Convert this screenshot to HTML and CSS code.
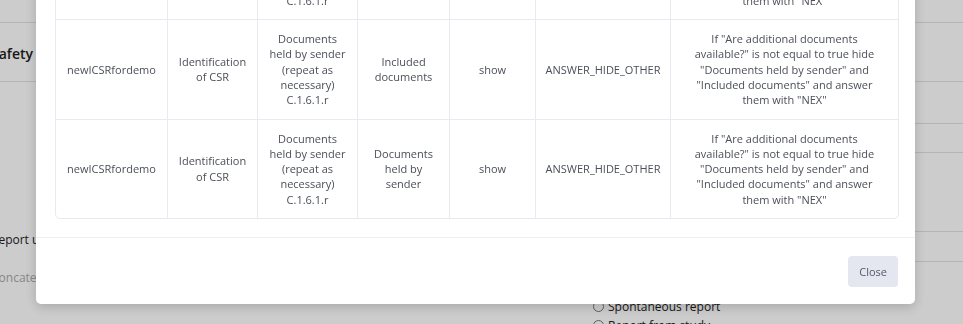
FILE: index.html
```html
<!DOCTYPE html>
<html lang="en">
<head>
    <meta charset="UTF-8">
    <meta name="viewport" content="width=device-width, initial-scale=1.0">
    <title>Safety report - rules</title>
    <link rel="stylesheet" href="styles.css">
</head>
<body>
    <div class="page">
        <div class="top-row"></div>
        <div class="title-row">Safety report details</div>
        <div class="form-area">
            <div class="form-left">
                <div class="field-label">Report unique identifier</div>
                <div class="field-input">Concatenated identifier</div>
            </div>
            <div class="form-right">
                <div class="line-block b1"></div>
                <div class="line-block b2"></div>
                <div class="line-block b3"></div>
                <div class="line-block b4"></div>
                <label class="radio"><span class="circle"></span>Spontaneous report</label>
                <label class="radio"><span class="circle"></span>Report from study</label>
            </div>
        </div>
    </div>

    <div class="backdrop">
        <div class="modal">
            <div class="modal-header">Rules</div>
            <div class="modal-body">
                <table class="rules">
                    <colgroup>
                        <col style="width:112px">
                        <col style="width:90px">
                        <col style="width:100px">
                        <col style="width:92px">
                        <col style="width:86px">
                        <col style="width:135px">
                        <col style="width:227px">
                    </colgroup>
                    <thead>
                        <tr>
                            <th>Form</th>
                            <th>Section</th>
                            <th>Field</th>
                            <th>Target</th>
                            <th>Action</th>
                            <th>Type</th>
                            <th>Description</th>
                        </tr>
                    </thead>
                    <tbody id="rules-body"></tbody>
                </table>
            </div>
            <div class="modal-footer">
                <button class="btn-close">Close</button>
            </div>
        </div>
    </div>

    <script>
        const desc = 'If "Are additional documents available?" is not equal to true hide "Documents held by sender" and "Included documents" and answer them with "NEX"';
        const rules = [
            { form: "newICSRfordemo", section: "Identification of CSR", field: "Documents held by sender (repeat as necessary) C.1.6.1.r", target: "Documents held by sender", action: "show", type: "ANSWER_HIDE_OTHER", desc },
            { form: "newICSRfordemo", section: "Identification of CSR", field: "Documents held by sender (repeat as necessary) C.1.6.1.r", target: "Included documents", action: "show", type: "ANSWER_HIDE_OTHER", desc },
            { form: "newICSRfordemo", section: "Identification of CSR", field: "Documents held by sender (repeat as necessary) C.1.6.1.r", target: "Documents held by sender", action: "show", type: "ANSWER_HIDE_OTHER", desc }
        ];

        const body = document.getElementById('rules-body');
        rules.forEach(rule => {
            const tr = document.createElement('tr');
            [rule.form, rule.section, rule.field, rule.target, rule.action, rule.type, rule.desc].forEach((value, i) => {
                const td = document.createElement('td');
                if (i === 6) td.className = 'desc';
                td.textContent = value;
                tr.appendChild(td);
            });
            body.appendChild(tr);
        });
    </script>
</body>
</html>
```

FILE: styles.css
```css
body {
    margin: 0;
    background-color: #fff;
    font-family: "Open Sans", Arial, sans-serif;
    color: #222;
    overflow: hidden;
}

/* page behind the modal */
.page {
    margin-left: -9px;
}

.top-row {
    height: 22px;
    border-bottom: 1px solid #e1e1e4;
}

.title-row {
    height: 59px;
    display: flex;
    align-items: center;
    padding-top: 2px;
    box-sizing: border-box;
    border-bottom: 1px solid #e1e1e4;
    font-size: 14px;
    font-weight: 600;
    color: #1d1d1d;
}

.form-area {
    display: flex;
}

.form-left {
    width: 600px;
    padding-top: 150px;
}

.field-label {
    font-size: 12px;
    line-height: 16px;
    color: #222;
}

.field-input {
    margin-top: 22px;
    font-size: 12px;
    line-height: 16px;
    color: #aaa;
}

.form-right {
    flex: 1;
    display: flex;
    flex-direction: column;
}

.line-block {
    border-bottom: 1px solid #e1e1e4;
}

.b1 { height: 41px; }
.b2 { height: 28px; }
.b3 { height: 78px; }
.b4 { height: 29px; }

.radio {
    display: flex;
    align-items: center;
    gap: 4px;
    padding-left: 2px;
    font-size: 12px;
    line-height: 19px;
    color: #222;
}

.radio:first-of-type {
    margin-top: 35px;
}

.circle {
    width: 9px;
    height: 9px;
    border: 1px solid #777;
    border-radius: 50%;
}

/* modal */
.backdrop {
    position: fixed;
    inset: 0;
    background-color: rgba(0, 0, 0, 0.2);
    display: flex;
    align-items: flex-end;
    padding: 0 0 20px 36px;
}

.modal {
    width: 879px;
    background-color: #fff;
    border-radius: 5px;
    box-shadow: 0 3px 12px rgba(0, 0, 0, 0.18);
}

.modal-header {
    padding: 16px 19px;
    font-size: 15px;
    font-weight: 600;
    border-bottom: 1px solid #eeeef2;
}

.modal-body {
    padding: 19px 18px 18px 19px;
}

.rules {
    width: 842px;
    table-layout: fixed;
    border-collapse: separate;
    border-spacing: 0;
    border: 1px solid #e9e9f0;
    border-radius: 5px;
    font-size: 11px;
    line-height: 15.3px;
    color: #4b4f58;
}

.rules th,
.rules td {
    padding: 11px 9px;
    text-align: center;
    vertical-align: middle;
    border-right: 1px solid #e9e9f0;
    border-bottom: 1px solid #e9e9f0;
}

.rules th {
    font-weight: 600;
}

.rules th:last-child,
.rules td:last-child {
    border-right: none;
}

.rules tbody tr:last-child td {
    border-bottom: none;
}

.rules td.desc {
    padding: 11px 17px;
}

.modal-footer {
    display: flex;
    justify-content: flex-end;
    padding: 18px 17px 17px;
    border-top: 1px solid #eeeef2;
}

.btn-close {
    height: 31px;
    padding: 0 11px;
    border: none;
    border-radius: 4px;
    background-color: #e4e7f0;
    color: #555a63;
    font-family: "Open Sans", Arial, sans-serif;
    font-size: 11px;
    cursor: pointer;
}
```
